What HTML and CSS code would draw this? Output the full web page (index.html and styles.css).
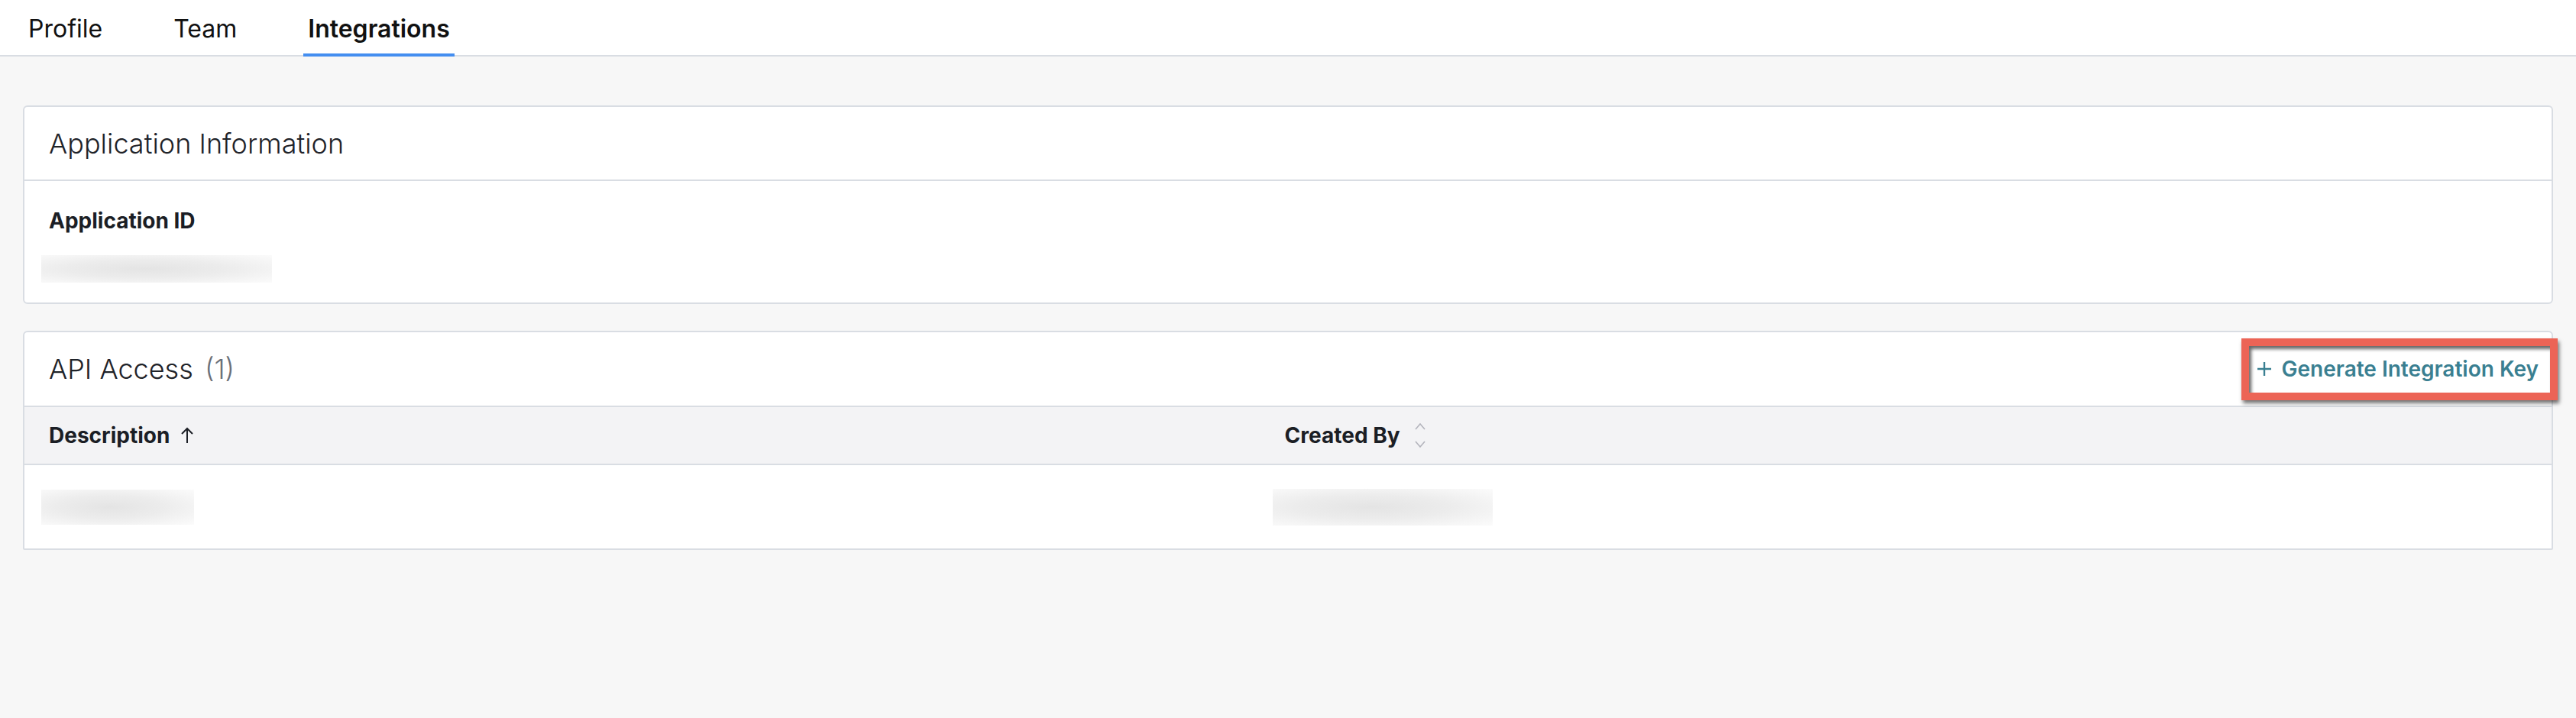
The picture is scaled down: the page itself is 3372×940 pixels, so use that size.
FILE: index.html
```html
<!DOCTYPE html>
<html lang="en">
<head>
    <meta charset="UTF-8">
    <meta name="viewport" content="width=device-width, initial-scale=1.0">
    <title>Settings - Integrations</title>
    <link rel="stylesheet" href="styles.css">
</head>
<body>
    <nav class="tabs">
        <a href="#" class="tab">Profile</a>
        <a href="#" class="tab">Team</a>
        <a href="#" class="tab active">Integrations</a>
    </nav>

    <main class="content">
        <section class="card">
            <div class="card-header">
                <h2 class="card-title">Application Information</h2>
            </div>
            <div class="card-body">
                <div class="field-label">Application ID</div>
                <div class="redacted redacted-id"></div>
            </div>
        </section>

        <section class="card card-table">
            <div class="card-header">
                <h2 class="card-title">API Access <span class="count">(1)</span></h2>
                <span class="highlight">
                    <button class="link-button">
                        <svg class="plus" width="20" height="20" viewBox="0 0 20 20"><path d="M10 1v18M1 10h18" stroke="currentColor" stroke-width="2.4" fill="none"/></svg>
                        Generate Integration Key
                    </button>
                </span>
            </div>
            <div class="table">
                <div class="table-head">
                    <div class="th">
                        Description
                        <svg class="sort-arrow" width="18" height="22" viewBox="0 0 18 22"><path d="M9 21V2M2 9l7-7 7 7" stroke="currentColor" stroke-width="2" fill="none"/></svg>
                    </div>
                    <div class="th">
                        Created By
                        <svg class="sort-both" width="16" height="34" viewBox="0 0 16 34"><path d="M2 9l6-7 6 7M2 25l6 7 6-7" stroke="currentColor" stroke-width="1.6" fill="none"/></svg>
                    </div>
                </div>
                <div class="table-row">
                    <div class="td"><div class="redacted redacted-desc"></div></div>
                    <div class="td"><div class="redacted redacted-user"></div></div>
                </div>
            </div>
        </section>
    </main>
</body>
</html>
```

FILE: styles.css
```css
body { margin: 0; background: #f7f7f7; font-family: Inter, "Noto Sans", sans-serif; color: #1b1e25; }

.tabs { display: flex; gap: 81px; height: 72px; padding-left: 31px; background: #fff; border-bottom: 2px solid #d9dde3; }
.tab { display: flex; align-items: center; padding: 4px 6px 0; margin-bottom: -2px; border-bottom: 4px solid transparent; font-size: 32px; color: #111; text-decoration: none; }
.tab.active { font-weight: 600; border-bottom-color: #448ef0; }

.content { padding: 64px 30px 0; }

.card { background: #fff; border: 2px solid #d9dde3; border-radius: 6px; margin-bottom: 35px; }
.card-table { border-radius: 6px 6px 2px 2px; }
.card-header { display: flex; align-items: center; justify-content: space-between; height: 95px; padding: 0 0 0 32px; border-bottom: 2px solid #d9dde3; }
.card-table .card-header { height: 96px; }
.card-title { margin: 0; font-size: 36px; font-weight: 300; color: #1f2329; }
.count { margin-left: 5px; color: #6b7078; }

.card-body { padding: 32px 32px 26px; }
.field-label { font-size: 28px; font-weight: 700; line-height: 40px; margin-bottom: 25px; }

.redacted { height: 36px; background: radial-gradient(ellipse at 45% 50%, #e4e4e4 0%, #ececec 45%, #f6f6f6 80%, #fbfbfb 100%); }
.redacted-id { width: 302px; margin-left: -10px; }
.redacted-desc { width: 200px; height: 46px; margin-left: -10px; }
.redacted-user { width: 288px; height: 48px; margin-left: -16px; }

.highlight { margin-right: -8px; border: 10px solid #ec6456; box-shadow: 2px 4px 5px rgba(0, 0, 0, 0.55), inset 3px 4px 4px rgba(0, 0, 0, 0.6); background: #fff; }
.link-button { display: flex; align-items: center; gap: 13px; height: 61px; padding: 0 15px 0 10px; border: 0; background: transparent; font-family: inherit; font-size: 28px; font-weight: 600; color: #3a7f91; }

.table-head, .table-row { display: grid; grid-template-columns: 48.9% 1fr; }
.table-head { height: 74px; background: #f3f3f5; border-bottom: 2px solid #d9dde3; }
.th { display: flex; align-items: center; gap: 14px; padding-left: 32px; font-size: 28px; font-weight: 700; }
.th .sort-both { color: #b3b4bc; margin-left: 4px; }
.table-row { height: 109px; }
.td { display: flex; align-items: center; padding-left: 32px; }
```
